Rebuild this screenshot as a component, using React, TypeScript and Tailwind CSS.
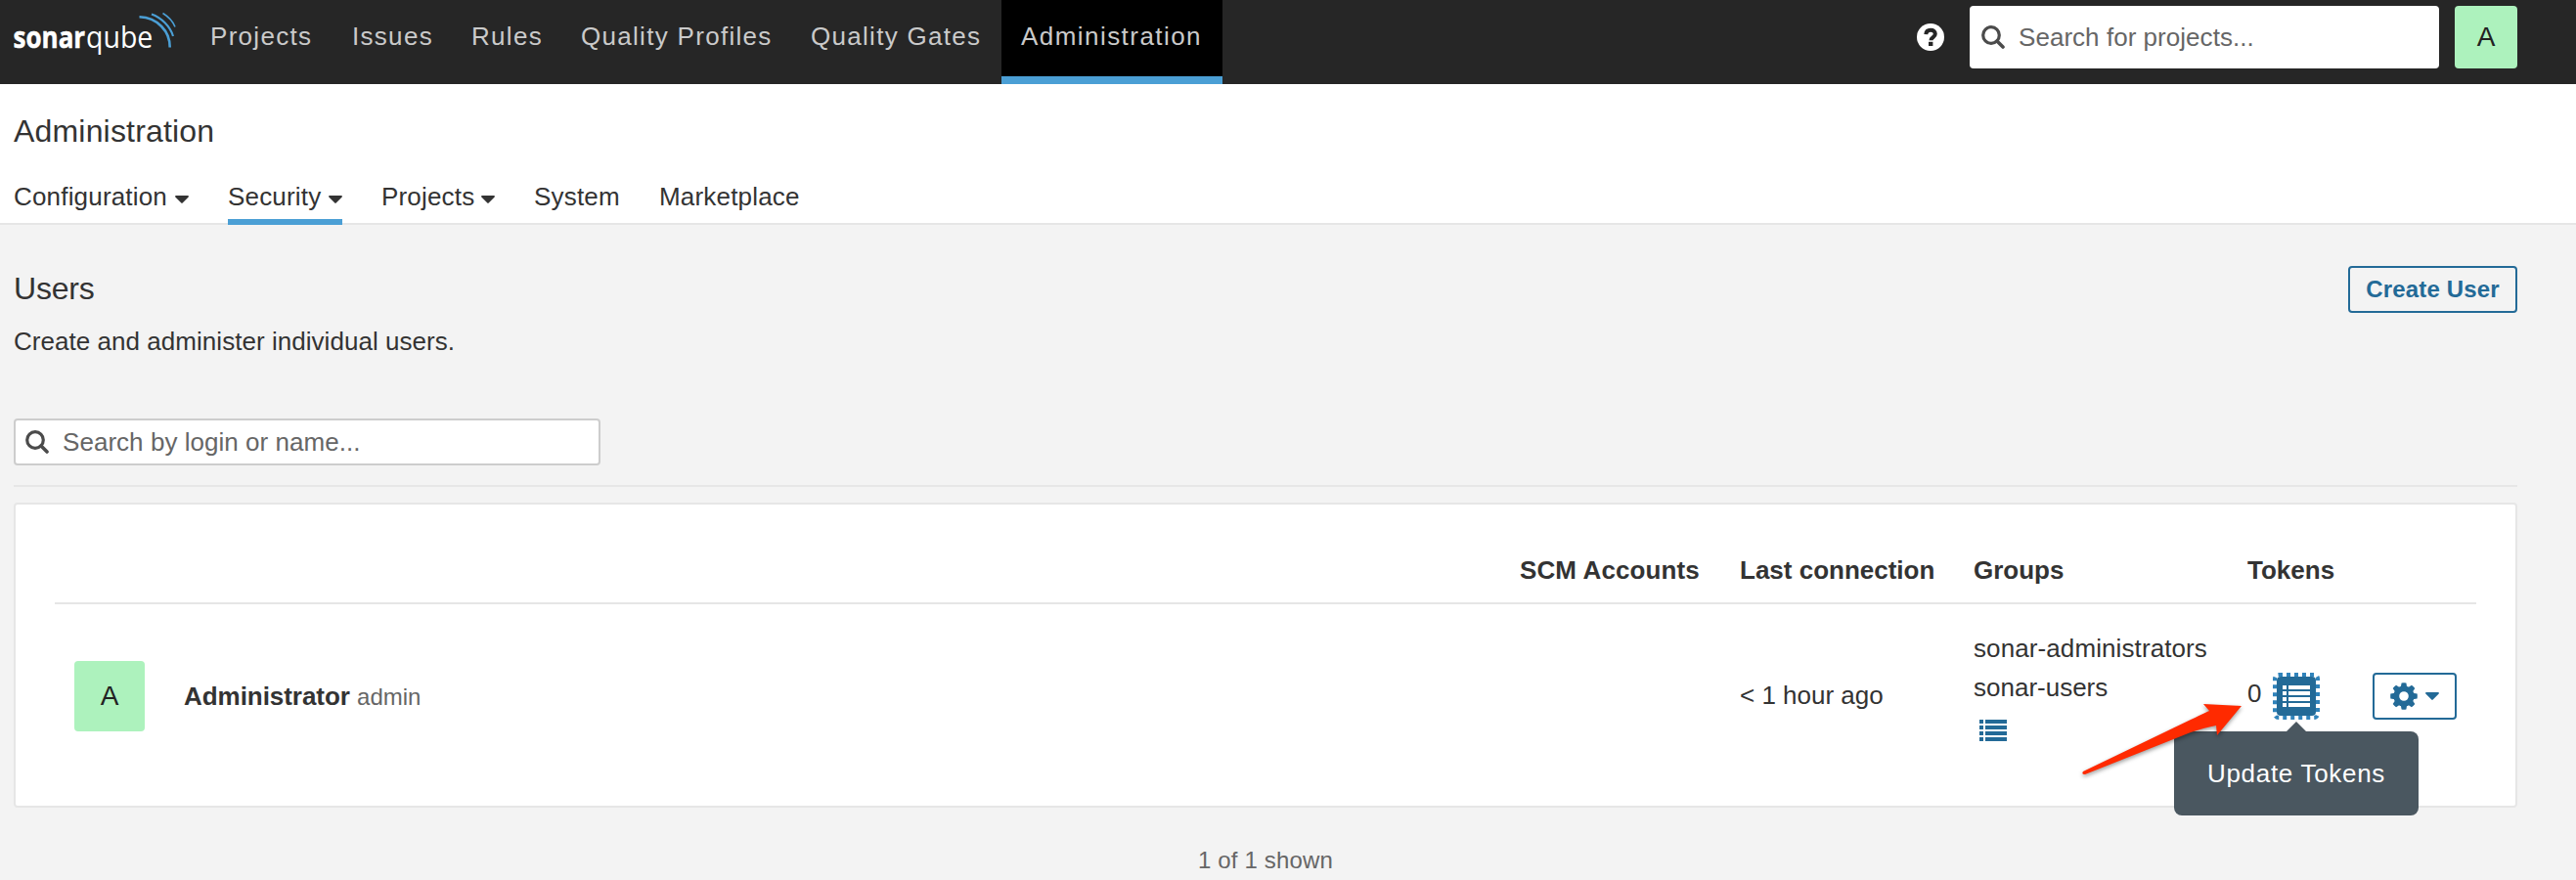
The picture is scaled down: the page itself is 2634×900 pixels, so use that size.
import React from "react";

function SearchIcon({ className }: { className?: string }) {
  return (
    <svg viewBox="0 0 24 24" className={className} fill="none" stroke="#4b4b4b">
      <circle cx="10" cy="10" r="8.3" strokeWidth="3.2" />
      <path d="M16 16L22 22" strokeWidth="3.6" strokeLinecap="round" />
    </svg>
  );
}

function Caret({ className }: { className?: string }) {
  return (
    <svg viewBox="0 0 14 8" className={className} fill="currentColor">
      <path d="M1 0h12a.9.9 0 0 1 .7 1.5L7.7 7.6a1 1 0 0 1-1.4 0L.3 1.5A.9.9 0 0 1 1 0z" />
    </svg>
  );
}

function ListIcon({ className }: { className?: string }) {
  return (
    <svg viewBox="0 0 28 22" className={className} fill="currentColor">
      {[0, 6, 12, 18].map((y) => (
        <g key={y}>
          <rect x="0" y={y} width="4" height="4" />
          <rect x="6" y={y} width="22" height="4" />
        </g>
      ))}
    </svg>
  );
}

function Logo() {
  return (
    <svg viewBox="0 0 180 86" className="h-[86px] w-[180px] shrink-0">
      <g fontFamily="Open Sans" fontSize="31" fill="#fff">
        <text transform="translate(-0.5 48.500) scale(0.84 1)" fontWeight="700" stroke="#fff" strokeWidth="0.500">sonar</text>
        <text transform="translate(74 48.500) scale(0.92 1)" fontWeight="400">qube</text>
      </g>
      <g fill="none" stroke="#4b9fd5">
        <path d="M128.500 17.300C147 18 160 32 159.700 48.500" strokeWidth="2.600" />
        <path d="M141 14.500C151 18 160 27 163 37" strokeWidth="2.100" />
        <path d="M152.500 13.500C158 17 163 22 165 27.500" strokeWidth="1.600" />
      </g>
    </svg>
  );
}

const NAV = [
  { label: "Projects", box: "w-[145px]" },
  { label: "Issues", box: "w-[122px]" },
  { label: "Rules", box: "w-28" },
  { label: "Quality Profiles", box: "w-[235px]" },
  { label: "Quality Gates", box: "w-[216px]" },
];

const TABS = [
  { label: "Configuration", menu: true, box: "w-[179px]" },
  { label: "Security", menu: true, box: "w-[117px] border-b-[6px] border-[#4b9fd5]" },
  { label: "Projects", menu: true, box: "w-[116px]" },
  { label: "System", menu: false, box: "w-[88px]" },
  { label: "Marketplace", menu: false, box: "" },
];

export default function App() {
  return (
    <div className="relative h-[900px] w-[2634px] overflow-hidden bg-[#f3f3f3] font-['Liberation_Sans',Arial,sans-serif] text-[26px] leading-[40px] text-[#333]">
      <header className="flex h-[86px] bg-[#262626] pr-[60px] pl-[14px]">
        <Logo />
        <nav className="flex flex-1 tracking-[1.3px] whitespace-nowrap text-[#cacaca]">
          {NAV.map((n) => (
            <a key={n.label} className={`${n.box} shrink-0 pt-[17px] pl-[21px]`}>
              {n.label}
            </a>
          ))}
          <a className="h-[86px] w-[226px] border-b-8 border-[#4b9fd5] bg-black pt-[17px] pl-5 tracking-[1.45px]">
            Administration
          </a>
        </nav>
        <div className="flex items-start pt-[6px]">
          <svg viewBox="0 0 28 28" className="mt-[18px] mr-[26px] size-7">
            <circle cx="14" cy="14" r="14" fill="#fff" />
            <path d="M9.300 11.200C9.500 8 11.600 6.800 14.100 6.800c2.700 0 4.700 1.500 4.700 3.900 0 3.500-4.300 3.200-4.300 6.500" fill="none" stroke="#262626" strokeWidth="4" />
            <rect x="12" y="18.800" width="4.400" height="4.200" fill="#262626" />
          </svg>
          <div className="flex h-16 w-[480px] items-center rounded-[4px] bg-white pl-3 text-[#666]">
            <SearchIcon className="mr-[14px] size-6" />
            <span className="tracking-[0.04px]">Search for projects...</span>
          </div>
          <div className="ml-4 flex size-16 items-center justify-center rounded-[4px] bg-[#adf2bd] text-[28px] text-[#222]">A</div>
        </div>
      </header>

      <section className="flex h-[144px] flex-col border-b-2 border-[#e6e6e6] bg-white px-[14px]">
        <h1 className="h-[84px] shrink-0 pt-[28px] text-[32px] tracking-[0.18px]">Administration</h1>
        <div className="flex shrink-0 gap-10 tracking-[0.18px]">
          {TABS.map((t) => (
            <div key={t.label} className={`flex h-[60px] items-start justify-between pt-[11px] ${t.box}`}>
              {t.label}
              {t.menu && <Caret className="mt-[19px] h-2 w-[14px]" />}
            </div>
          ))}
        </div>
      </section>

      <main className="flex flex-col pr-[60px] pl-[14px]">
        <div className="flex h-[198px] justify-between">
          <div>
            <h2 className="pt-[45px] text-[32px] tracking-[-0.2px]">Users</h2>
            <p className="pt-[14px] tracking-[0.04px]">Create and administer individual users.</p>
          </div>
          <button className="mt-[42px] flex h-12 w-[173px] items-center justify-center rounded-[4px] border-2 border-[#236a97] text-[24px] font-bold tracking-[0.15px] text-[#236a97]">
            Create User
          </button>
        </div>
        <div className="flex h-12 w-[600px] items-center rounded-[4px] border-2 border-[#cdcdcd] bg-white pl-[10px] text-[#666]">
          <SearchIcon className="mr-[14px] size-6" />
          <span className="tracking-[0.04px]">Search by login or name...</span>
        </div>
        <div className="mt-5 h-[2px] bg-[#e6e6e6]" />

        <div className="mt-4 h-[312px] rounded-[4px] border-2 border-[#e6e6e6] bg-white px-10">
          <div className="grid h-[102px] grid-cols-[225px_239px_280px_1fr] border-b-2 border-[#e6e6e6] pt-[47px] pl-[1498px] font-bold">
            <span className="tracking-[0.12px]">SCM Accounts</span>
            <span>Last connection</span>
            <span>Groups</span>
            <span>Tokens</span>
          </div>
          <div className="grid h-[206px] grid-cols-[132px_1366px_225px_239px_280px_128px_1fr] items-start">
            <div className="mt-[58px] ml-5 flex size-[72px] items-center justify-center rounded-[4px] bg-[#adf2bd] text-[28px] text-[#222]">A</div>
            <div className="mt-[74px]">
              <b className="tracking-[-0.05px]">Administrator</b> <span className="text-[24px] text-[#666]">admin</span>
            </div>
            <div />
            <div className="mt-[73px]">&lt; 1 hour ago</div>
            <div className="mt-[25px]">
              <div className="tracking-[0.1px]">sonar-administrators</div>
              <div>sonar-users</div>
              <ListIcon className="mt-[13px] ml-[6px] h-[22px] w-7 text-[#236a97]" />
            </div>
            <div className="flex items-start">
              <span className="mt-[71px] w-[26px]">0</span>
              <div className="relative mt-[70px]">
                <svg viewBox="0 0 48 48" className="size-12">
                  <rect x="2" y="2" width="44" height="44" rx="4" fill="none" stroke="#3083bb" strokeWidth="4" strokeDasharray="4 4" />
                  <rect x="4" y="4" width="40" height="40" rx="4" fill="#236a97" />
                </svg>
                <ListIcon className="absolute top-[13px] left-[10px] h-[22px] w-7 text-white" />
                <div className="absolute top-[50px] left-1/2 z-10 flex -translate-x-1/2 flex-col items-center">
                  <svg viewBox="0 0 20 10" className="h-[10px] w-5">
                    <path d="M10 0L20 10H0z" fill="#4a5760" />
                  </svg>
                  <div className="h-[86px] w-[250px] rounded-[8px] bg-[#4a5760] pt-[23px] text-center tracking-[0.7px] whitespace-nowrap text-white">
                    Update Tokens
                  </div>
                </div>
              </div>
            </div>
            <button className="mt-[70px] flex h-12 w-[86px] items-center rounded-[4px] border-2 border-[#236a97] pl-4 text-[#236a97]">
              <svg viewBox="0 0 28 28" className="mr-2 size-7" fill="currentColor">
                <circle cx="14" cy="14" r="7.700" fill="none" stroke="currentColor" strokeWidth="5.800" />
                {[0, 45, 90, 135, 180, 225, 270, 315].map((a) => (
                  <path key={a} d="M10.800 5l.8-4.600a14 14 0 0 1 4.800 0l.8 4.600z" transform={`rotate(${a} 14 14)`} />
                ))}
              </svg>
              <Caret className="h-2 w-[14px]" />
            </button>
          </div>
        </div>
        <p className="mt-[34px] text-center text-[24px] tracking-[0.15px] text-[#666]">1 of 1 shown</p>
      </main>

      <svg viewBox="0 0 180 90" className="absolute top-[710px] left-[2120px] z-20 h-[90px] w-[180px] drop-shadow-[0_2px_2px_rgba(0,0,0,0.4)]">
        <path d="M10 79L120 26Q139 17 139 17L133 10L172 12L147 42L146 32Q135 34 120 39L12 82Q8 82 10 79z" fill="#ff2a00" />
      </svg>
    </div>
  );
}
